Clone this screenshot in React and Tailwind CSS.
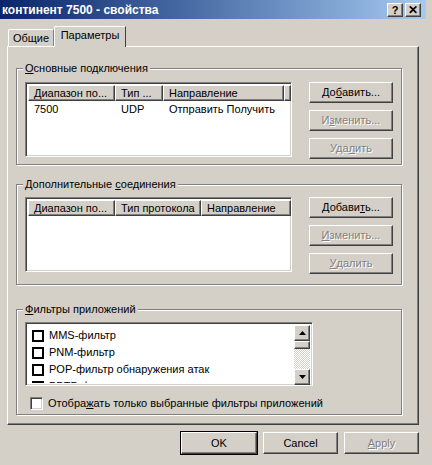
import React from 'react';

const raised = 'bg-[#d4d0c8] border border-t-white border-l-white border-r-[#404040] border-b-[#404040] shadow-[inset_-1px_-1px_0_#808080]';
const sunken = 'border border-t-[#808080] border-l-[#808080] border-r-white border-b-white shadow-[inset_1px_1px_0_#404040,inset_-1px_-1px_0_#d4d0c8]';
const disabledText = 'text-[#808080] [text-shadow:1px_1px_0_#fff]';

const Btn = ({ children, disabled, className = '' }) => (
  <div className={`${raised} flex items-center justify-center ${disabled ? disabledText : ''} ${className}`}>
    {children}
  </div>
);

const Group = ({ label, className = '', children }) => (
  <div className={`relative border border-[#808080] shadow-[1px_1px_0_#fff,inset_1px_1px_0_#fff] ${className}`}>
    <span className="absolute -top-[8px] left-[6px] px-[2px] bg-[#d4d0c8] leading-[14px]">{label}</span>
    {children}
  </div>
);

const HeaderCell = ({ w, children }) => (
  <div
    className={`${raised} h-[16px] shrink-0 flex items-center pl-[5px] leading-none whitespace-nowrap overflow-hidden ${w}`}
  >
    {children}
  </div>
);

const SideButtons = ({ labels }) => (
  <div className="flex flex-col gap-[7px] ml-[17px]">
    <Btn className="w-[84px] h-[21px]">{labels[0]}</Btn>
    <Btn disabled className="w-[84px] h-[21px]">{labels[1]}</Btn>
    <Btn disabled className="w-[84px] h-[21px]">{labels[2]}</Btn>
  </div>
);

const filters = ['MMS-фильтр', 'PNM-фильтр', 'POP-фильтр обнаружения атак', 'PPTP-фильтр'];

export default function App() {
  return (
    <div className="w-[432px] h-[465px] bg-[#d4d0c8] overflow-hidden text-[11px] text-black font-['Liberation_Sans',Arial,sans-serif]">
      {/* Title bar */}
      <div className="h-[19px] w-[426px] bg-gradient-to-r from-[#0a246a] to-[#a6caf0] flex items-center justify-between pl-[2px] pr-[5px]">
        <span className="text-white font-bold text-[12px] leading-none">континент 7500 - свойства</span>
        <div className="flex gap-[2px] mt-[1px]">
          <Btn className="w-[16px] h-[14px] font-bold text-[11px] leading-none">?</Btn>
          <Btn className="w-[16px] h-[14px] font-bold text-[12px] leading-none">✕</Btn>
        </div>
      </div>

      <div className="pl-[7px] pt-[7px] w-[426px]">
        {/* Tabs */}
        <div className="flex items-end h-[20px]">
          <div className="h-[17px] w-[46px] ml-[1px] border-t border-l border-white border-r border-r-[#808080] flex items-center justify-center rounded-tl-[2px]">
            Общие
          </div>
          <div className="relative z-10 h-[21px] -mb-px w-[72px] bg-[#d4d0c8] border-t border-l border-white border-r border-r-[#404040] flex items-center justify-center pb-[3px] rounded-tl-[2px]">
            Параметры
          </div>
        </div>

        {/* Panel */}
        <div className="w-[412px] h-[379px] border border-t-white border-l-white border-r-[#404040] border-b-[#404040] shadow-[inset_-1px_-1px_0_#808080] pl-[8px] pt-[21px]">
          <Group label={<><u>О</u>сновные подключения</>} className="w-[386px] h-[97px]">
            <div className="flex pl-[8px] pt-[13px]">
              <div className={`${sunken} w-[267px] h-[75px] bg-white p-[2px] overflow-hidden`}>
                <div className="flex">
                  <HeaderCell w="w-[87px]">Диапазон по...</HeaderCell>
                  <HeaderCell w="w-[48px]">Тип ...</HeaderCell>
                  <HeaderCell w="w-[121px]">Направление</HeaderCell>
                  <HeaderCell w="flex-1">{''}</HeaderCell>
                </div>
                <div className="flex h-[16px] items-center">
                  <span className="w-[87px] pl-[6px]">7500</span>
                  <span className="w-[48px] pl-[6px]">UDP</span>
                  <span className="pl-[6px] whitespace-nowrap">Отправить Получить</span>
                </div>
              </div>
              <SideButtons
                labels={[
                  <>До<u>б</u>авить...</>,
                  <>И<u>з</u>менить...</>,
                  <>Уда<u>л</u>ить</>,
                ]}
              />
            </div>
          </Group>

          <Group label={<>Дополнительные <u>с</u>оединения</>} className="w-[386px] h-[101px] mt-[19px]">
            <div className="flex pl-[8px] pt-[12px]">
              <div className={`${sunken} w-[267px] h-[75px] bg-white p-[2px] overflow-hidden`}>
                <div className="flex">
                  <HeaderCell w="w-[87px]">Диапазон по...</HeaderCell>
                  <HeaderCell w="w-[86px]">Тип протокола</HeaderCell>
                  <HeaderCell w="w-[90px]">Направление</HeaderCell>
                  <HeaderCell w="flex-1">{''}</HeaderCell>
                </div>
              </div>
              <SideButtons
                labels={[
                  <>Добави<u>т</u>ь...</>,
                  <><u>И</u>зменить...</>,
                  <><u>У</u>далить</>,
                ]}
              />
            </div>
          </Group>

          <Group label={<><u>Ф</u>ильтры приложений</>} className="w-[386px] h-[106px] mt-[24px]">
            <div className="pl-[8px] pt-[12px]">
              <div className={`${sunken} w-[288px] h-[64px] bg-white p-[2px] flex overflow-hidden`}>
                <div className="flex-1 pt-[2px] overflow-hidden">
                  {filters.map((f) => (
                    <div key={f} className="h-[17px] flex items-center whitespace-nowrap">
                      <span className="w-[12px] h-[12px] border-2 border-black bg-white ml-[4px] mr-[5px] shrink-0" />
                      {f}
                    </div>
                  ))}
                </div>
                <div className="w-[16px] h-[60px] flex flex-col">
                  <div className={`${raised} h-[16px] flex items-center justify-center`}>
                    <svg width="7" height="4" viewBox="0 0 7 4"><path d="M3.5 0L7 4H0z" fill="#000" /></svg>
                  </div>
                  <div className={`${raised} h-[8px]`} />
                  <div className="flex-1 bg-[repeating-conic-gradient(#fff_0_25%,#d4d0c8_0_50%)] bg-[length:2px_2px]" />
                  <div className={`${raised} h-[16px] flex items-center justify-center`}>
                    <svg width="7" height="4" viewBox="0 0 7 4"><path d="M0 0H7L3.5 4z" fill="#000" /></svg>
                  </div>
                </div>
              </div>
              <div className="flex items-center mt-[9px] ml-[5px]">
                <span className={`${sunken} w-[13px] h-[13px] bg-white shrink-0 mr-[5px]`} />
                <span>Отобра<u>ж</u>ать только выбранные фильтры приложений</span>
              </div>
            </div>
          </Group>
        </div>

        {/* Bottom buttons */}
        <div className="w-[412px] flex justify-end gap-[6px] mt-[7px]">
          <Btn className="w-[76px] h-[22px] outline outline-1 outline-black">OK</Btn>
          <Btn className="w-[75px] h-[22px]">Cancel</Btn>
          <Btn disabled className="w-[75px] h-[22px]"><u>A</u>pply</Btn>
        </div>
      </div>
    </div>
  );
}
